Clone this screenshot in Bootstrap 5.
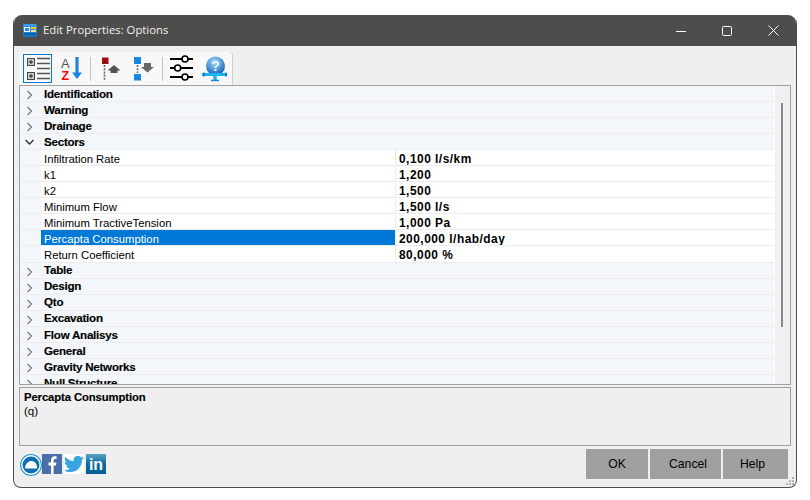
<!DOCTYPE html>
<html lang="en"><head><meta charset="utf-8"><title>Edit Properties: Options</title>
<link href="https://cdn.jsdelivr.net/npm/bootstrap@5.3.0/dist/css/bootstrap.min.css" rel="stylesheet">
<style>
body{background:#fff;margin:0;font-family:"Liberation Sans",Arial,sans-serif;font-size:12px;color:#000;}
.win{width:784px;height:473px;margin:15px 0 0 13px;background:#efefef;border:1px solid #4d4d4b;border-top:0;border-radius:9px 9px 8px 8px;overflow:hidden;position:relative;}
.tbar{height:31px;background:#4d4d4b;color:#f2f2f2;font-family:"Open Sans",sans-serif;font-size:11.3px;padding-left:9px;}
.tbar .ttl{margin-left:6px;}
.wbtn{width:46px;height:31px;}
.tools{height:33px;width:214px;margin:6px 0 0 5px;background:#f8f8f8;border-right:1px solid #cfcfcf;border-radius:4px 4px 0 0;padding-left:4px;}
.tsel{width:29px;height:29px;border:1px solid #0078d7;margin-top:2px;}
.tic{height:29px;margin-top:2px;}
.w38{width:38px}.w35{width:35px}.w36{width:36px}.w37{width:37px}.w32{width:32px}
.tsep{width:1px;height:24px;background:#c4c4c4;margin-top:5px;}
.pg{width:772px;height:300px;margin:0 0 0 5px;border:1px solid #a0a0a0;background:#f3f6fb;overflow:hidden;}
.rows{width:754px;height:298px;overflow:hidden;}
.rw{height:16.06px;line-height:15px;border-bottom:1px solid #ececec;}
.gut{width:21px;flex:none;}
.sec{font-weight:700;padding-left:3px;font-size:11.6px;letter-spacing:-.25px;-webkit-text-stroke:.15px #000;}
.up .sec{line-height:13px;}
.nm{width:355px;flex:none;background:#fff;padding-left:3px;font-size:11.3px;line-height:19px;border-right:1px solid #ececec;overflow:hidden;}
.val{flex:1;background:#fff;padding-left:3px;font-weight:700;font-size:11.9px;line-height:19px;letter-spacing:.5px;overflow:hidden;}
.on .nm{background:#0078d7;color:#fff;}
.sb{width:16px;background:#f0f0f0;border-left:1px solid #fff;position:relative;flex:none;}
.thumb{position:absolute;left:6px;top:17px;width:2px;height:224px;background:#888;}
.desc{width:772px;height:59px;margin:2px 0 0 5px;border:1px solid #a0a0a0;padding:2px 4px;line-height:14px;font-size:11.6px;}
.desc b{font-size:11.3px;letter-spacing:-.1px;-webkit-text-stroke:.15px #000;}
.foot{height:32px;margin:3px 6px 0 6px;}
.bt{height:30px;background:#a0a0a0;border:0;color:#000;font-size:12.2px;padding:0;line-height:30px;text-align:center;margin-right:2px;}
.bok{width:62px}.bcancel{width:71px;padding-left:5px}.bhelp{width:65px;padding-right:6px}
.soc{width:20px;height:20px;margin-top:1px;}
.socgap{margin-left:2px;}
.icons{margin-top:4px;}
.grip{position:absolute;right:1px;bottom:1px;}
</style></head><body>
<div class="win d-flex flex-column">
 <div class="tbar d-flex align-items-center">
  <svg width="14" height="13" viewBox="0 0 14 13"><defs><linearGradient id="tg" x1="0" y1="0" x2="0" y2="1"><stop offset="0" stop-color="#3aa0ee"/><stop offset="1" stop-color="#1670c8"/></linearGradient></defs><rect width="14" height="13" rx="2" fill="url(#tg)"/><rect x="1" y="3" width="6" height="5" fill="#fff"/><rect x="2" y="4" width="4" height="3" fill="#1f8ee6"/><rect x="8" y="3" width="5" height="2" fill="#f4c430"/><rect x="8" y="6" width="5" height="2" fill="#f7e39a"/><rect x="1" y="9" width="12" height="2" fill="#0a5fb0"/></svg>
  <span class="ttl">Edit Properties: Options</span>
  <div class="ms-auto d-flex">
   <div class="wbtn d-flex align-items-center justify-content-center"><svg width="10" height="10" viewBox="0 0 10 10"><path d="M0 5.500h10" stroke="#fff"/></svg></div>
   <div class="wbtn d-flex align-items-center justify-content-center"><svg width="10" height="10" viewBox="0 0 10 10"><rect x=".5" y=".5" width="9" height="9" rx="1" fill="none" stroke="#fff"/></svg></div>
   <div class="wbtn d-flex align-items-center justify-content-center"><svg width="11" height="11" viewBox="0 0 11 11"><path d="M.5.5l10 10M10.500.5l-10 10" stroke="#fff"/></svg></div>
  </div>
 </div>
 <div class="tools d-flex align-items-start">
  <div class="tsel"><svg width="27" height="27" viewBox="0 0 27 27" class="d-block"><rect x="3.500" y="3.500" width="7" height="7" fill="#ccc" stroke="#444"/><rect x="3.500" y="17.500" width="7" height="7" fill="#ccc" stroke="#444"/><path d="M5 7h4M7 5v4M5 21h4M7 19v4" stroke="#222"/><path d="M13 3.500h13M13 8.500h13M13 13.500h13M13 18.500h13M13 23.500h13" stroke="#555" stroke-width="1.600"/></svg></div>
  <div class="tic w38"><svg width="38" height="29" viewBox="0 0 38 29" class="d-block"><text x="9" y="14" font-family="Liberation Sans" font-size="13" fill="#555">A</text><text x="9.500" y="25.500" font-family="Liberation Sans" font-weight="700" font-size="12.500" fill="#f00">Z</text><path d="M25 3v17" stroke="#1a86e0" stroke-width="3.200"/><path d="M20 18.500h10l-5 6.500z" fill="#1a86e0"/></svg></div>
  <div class="tsep"></div>
  <div class="tic w35"><svg width="35" height="29" viewBox="0 0 35 29" class="d-block"><rect x="11" y="3.500" width="6.500" height="6.500" fill="#9c1015"/><path d="M13.500 11v15" stroke="#666" stroke-width="1.600" stroke-dasharray="2 1.200"/><path d="M23 11l6.500 5.500h-3v2.500h-7v-2.500h-3z" fill="#555"/></svg></div>
  <div class="tic w36"><svg width="36" height="29" viewBox="0 0 36 29" class="d-block"><rect x="8" y="3" width="7" height="7" fill="#1a86e0"/><rect x="8" y="20" width="7" height="6.500" fill="#1a86e0"/><path d="M11.500 11v8" stroke="#666" stroke-width="1.600" stroke-dasharray="2 1.200"/><path d="M18 9h7v4h3l-6.500 5.500-6.500-5.500h3z" fill="#666"/></svg></div>
  <div class="tsep"></div>
  <div class="tic w37"><svg width="37" height="29" viewBox="0 0 37 29" class="d-block"><path d="M7 5h23M7 14h23M7 23h23" stroke="#000" stroke-width="2.200"/><circle cx="22" cy="5" r="3" fill="#fff" stroke="#000" stroke-width="1.600"/><circle cx="14.700" cy="14" r="3" fill="#fff" stroke="#000" stroke-width="1.600"/><circle cx="22" cy="23" r="3" fill="#fff" stroke="#000" stroke-width="1.600"/></svg></div>
  <div class="tic w32"><svg width="32" height="29" viewBox="0 0 32 29" class="d-block"><defs><radialGradient id="g" cx=".45" cy=".3" r=".7"><stop offset="0" stop-color="#a7dcff"/><stop offset="1" stop-color="#0f5fb5"/></radialGradient></defs><circle cx="15.500" cy="12" r="9.500" fill="url(#g)"/><text x="15.500" y="17" text-anchor="middle" font-family="Liberation Sans" font-weight="700" font-size="14" fill="#e8f6ff">?</text><path d="M2 20.500h25" stroke="#19b4f0" stroke-width="3"/><path d="M15 21v5" stroke="#19b4f0" stroke-width="3.500"/><path d="M11 26.500h8" stroke="#1a86e0" stroke-width="1.500"/><path d="M4 18.500v4M26 18.500v4" stroke="#0a5fb0" stroke-width="1.200"/></svg></div>
 </div>
 <div class="pg d-flex">
  <div class="rows">
   <div class="rw d-flex"><div class="gut"><svg width="21" height="15" viewBox="0 0 21 15"><path d="M7.500 5l4 4-4 4" fill="none" stroke="#808080" stroke-width="1.400"/></svg></div><div class="sec">Identification</div></div>
   <div class="rw d-flex"><div class="gut"><svg width="21" height="15" viewBox="0 0 21 15"><path d="M7.500 5l4 4-4 4" fill="none" stroke="#808080" stroke-width="1.400"/></svg></div><div class="sec">Warning</div></div>
   <div class="rw d-flex"><div class="gut"><svg width="21" height="15" viewBox="0 0 21 15"><path d="M7.500 5l4 4-4 4" fill="none" stroke="#808080" stroke-width="1.400"/></svg></div><div class="sec">Drainage</div></div>
   <div class="rw d-flex"><div class="gut"><svg width="21" height="15" viewBox="0 0 21 15"><path d="M5.500 6l4 4 4-4" fill="none" stroke="#333" stroke-width="1.400"/></svg></div><div class="sec">Sectors</div></div>
   <div class="rw d-flex"><div class="gut"></div><div class="nm">Infiltration Rate</div><div class="val">0,100 l/s/km</div></div>
   <div class="rw d-flex"><div class="gut"></div><div class="nm">k1</div><div class="val">1,200</div></div>
   <div class="rw d-flex"><div class="gut"></div><div class="nm">k2</div><div class="val">1,500</div></div>
   <div class="rw d-flex"><div class="gut"></div><div class="nm">Minimum Flow</div><div class="val">1,500 l/s</div></div>
   <div class="rw d-flex"><div class="gut"></div><div class="nm">Minimum TractiveTension</div><div class="val">1,000 Pa</div></div>
   <div class="rw d-flex on"><div class="gut"></div><div class="nm">Percapta Consumption</div><div class="val">200,000 l/hab/day</div></div>
   <div class="rw d-flex"><div class="gut"></div><div class="nm">Return Coefficient</div><div class="val">80,000 %</div></div>
   <div class="rw d-flex up"><div class="gut"><svg width="21" height="15" viewBox="0 0 21 15"><path d="M7.500 5l4 4-4 4" fill="none" stroke="#808080" stroke-width="1.400"/></svg></div><div class="sec">Table</div></div>
   <div class="rw d-flex up"><div class="gut"><svg width="21" height="15" viewBox="0 0 21 15"><path d="M7.500 5l4 4-4 4" fill="none" stroke="#808080" stroke-width="1.400"/></svg></div><div class="sec">Design</div></div>
   <div class="rw d-flex up"><div class="gut"><svg width="21" height="15" viewBox="0 0 21 15"><path d="M7.500 5l4 4-4 4" fill="none" stroke="#808080" stroke-width="1.400"/></svg></div><div class="sec">Qto</div></div>
   <div class="rw d-flex up"><div class="gut"><svg width="21" height="15" viewBox="0 0 21 15"><path d="M7.500 5l4 4-4 4" fill="none" stroke="#808080" stroke-width="1.400"/></svg></div><div class="sec">Excavation</div></div>
   <div class="rw d-flex"><div class="gut"><svg width="21" height="15" viewBox="0 0 21 15"><path d="M7.500 5l4 4-4 4" fill="none" stroke="#808080" stroke-width="1.400"/></svg></div><div class="sec">Flow Analisys</div></div>
   <div class="rw d-flex"><div class="gut"><svg width="21" height="15" viewBox="0 0 21 15"><path d="M7.500 5l4 4-4 4" fill="none" stroke="#808080" stroke-width="1.400"/></svg></div><div class="sec">General</div></div>
   <div class="rw d-flex"><div class="gut"><svg width="21" height="15" viewBox="0 0 21 15"><path d="M7.500 5l4 4-4 4" fill="none" stroke="#808080" stroke-width="1.400"/></svg></div><div class="sec">Gravity Networks</div></div>
   <div class="rw d-flex"><div class="gut"><svg width="21" height="15" viewBox="0 0 21 15"><path d="M7.500 5l4 4-4 4" fill="none" stroke="#808080" stroke-width="1.400"/></svg></div><div class="sec">Null Structure</div></div>
  </div>
  <div class="sb"><div class="thumb"></div></div>
 </div>
 <div class="desc"><b>Percapta Consumption</b><br>(q)</div>
 <div class="foot d-flex align-items-start">
  <div class="icons d-flex align-items-start">
   <svg width="22" height="24" viewBox="0 0 22 24"><circle cx="11" cy="12" r="10.500" fill="#fff" stroke="#2a9ad8" stroke-width="1.200"/><circle cx="11" cy="12" r="8.500" fill="#0f6fb0"/><path d="M5 15.500c0-5 3.500-7.500 6.500-7.500 3 0 5.500 3 5.500 6v1.500z" fill="#fff"/></svg>
   <svg class="soc" viewBox="0 0 20 20"><rect width="20" height="20" fill="#4a6ea9"/><path transform="translate(-3 -1) scale(1 1.050)" d="M12 20v-8H9.500V9H12V7c0-2.500 1.500-4 3.800-4 .9 0 1.700.1 1.700.1v2.600h-1.300c-1.200 0-1.600.8-1.600 1.500V9h2.800l-.4 3h-2.400v8z" fill="#fff"/></svg>
   <svg class="soc socgap" viewBox="0 0 24 24"><rect width="24" height="24" fill="#fff"/><path fill="#3aa4e0" d="M23.953 4.570a10 10 0 01-2.825.775 4.958 4.958 0 002.163-2.723c-.951.555-2.005.959-3.127 1.184a4.920 4.920 0 00-8.384 4.482C7.690 8.095 4.067 6.130 1.640 3.162a4.822 4.822 0 00-.666 2.475c0 1.710.870 3.213 2.188 4.096a4.904 4.904 0 01-2.228-.616v.060a4.923 4.923 0 003.946 4.827 4.996 4.996 0 01-2.212.085 4.936 4.936 0 004.604 3.417 9.867 9.867 0 01-6.102 2.105c-.390 0-.779-.023-1.170-.067a13.995 13.995 0 007.557 2.209c9.053 0 13.998-7.496 13.998-13.985 0-.210 0-.420-.015-.630A9.935 9.935 0 0024 4.590z"/></svg>
   <svg class="soc socgap" viewBox="0 0 20 20"><defs><linearGradient id="l" x1="0" y1="0" x2="0" y2="1"><stop offset="0" stop-color="#5ba3c9"/><stop offset=".5" stop-color="#0d6a9e"/><stop offset="1" stop-color="#005f92"/></linearGradient></defs><rect width="20" height="20" fill="url(#l)"/><text x="10" y="16" text-anchor="middle" font-family="Liberation Sans" font-weight="700" font-size="16" fill="#fff">in</text></svg>
  </div>
  <div class="ms-auto d-flex">
   <button class="bt bok">OK</button>
   <button class="bt bcancel">Cancel</button>
   <button class="bt bhelp">Help</button>
  </div>
 </div>
 <svg class="grip" width="9" height="9" viewBox="0 0 9 9"><g fill="#b5b5b5"><rect x="6" y="0" width="2" height="2"/><rect x="3" y="3" width="2" height="2"/><rect x="6" y="3" width="2" height="2"/><rect x="0" y="6" width="2" height="2"/><rect x="3" y="6" width="2" height="2"/><rect x="6" y="6" width="2" height="2"/></g></svg>
</div>
</body></html>
